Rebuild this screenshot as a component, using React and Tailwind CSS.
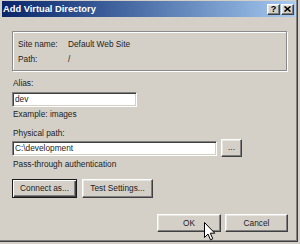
import React from 'react';

const raised =
  'border border-t-white border-l-white border-r-[#404040] border-b-[#404040] shadow-[inset_-1px_-1px_#808080,inset_1px_1px_#e8e6e1] bg-[#d4d0c8]';
const raisedDefault =
  'border border-[#1a1a1a] shadow-[inset_1px_1px_#fff,inset_-1px_-1px_#404040,inset_-2px_-2px_#808080] bg-[#d4d0c8]';
const sunken =
  'border border-t-[#808080] border-l-[#808080] border-r-white border-b-white shadow-[inset_1px_1px_#404040,inset_-1px_-1px_#d4d0c8] bg-white';

const Label = ({ children, className = '' }) => (
  <div className={`h-[11px] leading-[11px] pl-[1px] ${className}`}>{children}</div>
);

const Button = ({ children, className = '', def = false }) => (
  <div className={`flex items-center justify-center ${def ? raisedDefault : raised} ${className}`}>
    {children}
  </div>
);

const Cursor = () => (
  <svg className="absolute left-[204px] top-[222px]" width="12" height="19" viewBox="0 0 12 19">
    <path d="M0.5 0.5 L0.5 15.5 L4 12 L6.5 17.8 L8.8 16.8 L6.3 11.2 L10.8 11.2 Z" fill="#fff" stroke="#000" strokeWidth="1" strokeLinejoin="miter" />
  </svg>
);

export default function App() {
  return (
    <div
      className="relative w-[300px] h-[244px] bg-[#d4d0c8] text-[#1c1c1c] text-[8.3px] overflow-hidden"
      style={{ fontFamily: '"Liberation Sans", Arial, sans-serif' }}
    >
      <div className="w-[298px] h-[242px] border-r border-b border-r-[#404040] border-b-[#404040] shadow-[inset_-1px_-1px_#808080] pl-[2px] pt-[1px] pr-[2px]">
        {/* title bar */}
        <div className="h-[16px] flex items-center justify-between pl-[1px] pr-[1px] bg-gradient-to-r from-[#0a246a] to-[#a6caf0]">
          <span className="text-white font-bold text-[9.3px] leading-[16px]">Add Virtual Directory</span>
          <div className="flex gap-[1px]">
            <div className={`${raised} w-[13px] h-[11px] flex items-center justify-center text-[9px] font-bold leading-none text-black`}>?</div>
            <div className={`${raised} w-[13px] h-[11px] flex items-center justify-center`}>
              <svg width="7" height="6" viewBox="0 0 7 6">
                <path d="M0.5 0.5 L6.5 5.5 M6.5 0.5 L0.5 5.5" stroke="#000" strokeWidth="1.6" />
              </svg>
            </div>
          </div>
        </div>

        <div className="pl-[10px] pr-[10px]">
          {/* site info */}
          <div className="mt-[14px] w-[275px] h-[40px] border border-[#8a8a8a] shadow-[inset_1px_1px_#fff,1px_1px_#fff] pl-[5px] pt-[7px] flex flex-col gap-[4px]">
            <div className="flex h-[11px] leading-[11px]">
              <span className="w-[50px]">Site name:</span>
              <span>Default Web Site</span>
            </div>
            <div className="flex h-[11px] leading-[11px]">
              <span className="w-[50px]">Path:</span>
              <span>/</span>
            </div>
          </div>

          <Label className="mt-[7px]">Alias:</Label>
          <div className={`${sunken} mt-[3px] w-[125px] h-[15px] leading-[13px] pl-[2px]`}>dev</div>
          <Label className="mt-[2px]">Example: images</Label>

          <Label className="mt-[8px]">Physical path:</Label>
          <div className="flex items-center h-[18px] gap-[4px]">
            <div className={`${sunken} w-[205px] h-[15px] leading-[13px] pl-[2px]`}>C:\development</div>
            <Button className="w-[21px] h-[18px] leading-none pb-[1px]">...</Button>
          </div>
          <Label className="mt-[1.5px]">Pass-through authentication</Label>

          <div className="mt-[9.5px] flex gap-[5px]">
            <Button def className="w-[65px] h-[19px]">Connect as...</Button>
            <Button className="w-[71px] h-[19px]">Test Settings...</Button>
          </div>
        </div>

        <div className="mt-[16px] flex justify-end gap-[4px] pr-[7px]">
          <Button className="w-[64px] h-[18px]">OK</Button>
          <Button className="w-[63px] h-[18px]">Cancel</Button>
        </div>
      </div>
      <Cursor />
    </div>
  );
}
